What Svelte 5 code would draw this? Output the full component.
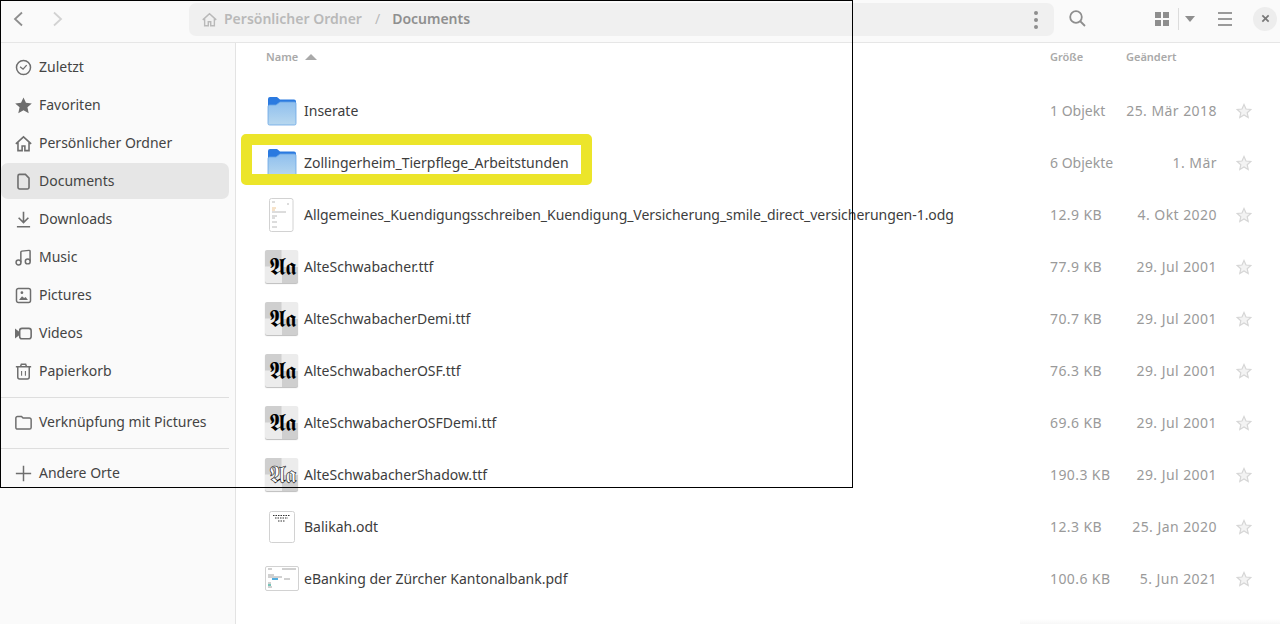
<script>
	const places = [
		{ label: 'Zuletzt', icon: 'recent' },
		{ label: 'Favoriten', icon: 'star' },
		{ label: 'Persönlicher Ordner', icon: 'home' },
		{ label: 'Documents', icon: 'doc', active: true },
		{ label: 'Downloads', icon: 'download' },
		{ label: 'Music', icon: 'music' },
		{ label: 'Pictures', icon: 'picture' },
		{ label: 'Videos', icon: 'video' },
		{ label: 'Papierkorb', icon: 'trash' }
	];

	const files = [
		{ name: 'Inserate', size: '1 Objekt', date: '25. Mär 2018', kind: 'folder' },
		{ name: 'Zollingerheim_Tierpflege_Arbeitstunden', size: '6 Objekte', date: '1. Mär', kind: 'folder' },
		{ name: 'Allgemeines_Kuendigungsschreiben_Kuendigung_Versicherung_smile_direct_versicherungen-1.odg', size: '12.9 KB', date: '4. Okt 2020', kind: 'letter' },
		{ name: 'AlteSchwabacher.ttf', size: '77.9 KB', date: '29. Jul 2001', kind: 'font' },
		{ name: 'AlteSchwabacherDemi.ttf', size: '70.7 KB', date: '29. Jul 2001', kind: 'font' },
		{ name: 'AlteSchwabacherOSF.ttf', size: '76.3 KB', date: '29. Jul 2001', kind: 'font' },
		{ name: 'AlteSchwabacherOSFDemi.ttf', size: '69.6 KB', date: '29. Jul 2001', kind: 'font' },
		{ name: 'AlteSchwabacherShadow.ttf', size: '190.3 KB', date: '29. Jul 2001', kind: 'shadow' },
		{ name: 'Balikah.odt', size: '12.3 KB', date: '25. Jan 2020', kind: 'note' },
		{ name: 'eBanking der Zürcher Kantonalbank.pdf', size: '100.6 KB', date: '5. Jun 2021', kind: 'pdf' }
	];
</script>

{#snippet placeIcon(name)}
	<svg class="place-icon" viewBox="0 0 16 16" aria-hidden="true">
		{#if name === 'recent'}
			<circle cx="8" cy="8" r="6.6" fill="none" stroke="currentColor" stroke-width="1.4" />
			<path d="M4.8 7.2 7.600 9.600 11 5.800" fill="none" stroke="currentColor" stroke-width="1.2" />
		{:else if name === 'star'}
			<path d="M8 .4l2.300 5 5.500.6-4.100 3.700 1.200 5.500L8 12.400l-4.900 2.800 1.200-5.500L.2 6l5.500-.6z" fill="currentColor" />
		{:else if name === 'home'}
			<path d="M.8 8.400 8 1.800l7.200 6.600M2.800 7v7.700h3.900V10.400h2.600v4.300h3.900V7" fill="none" stroke="currentColor" stroke-width="1.500" />
		{:else if name === 'doc'}
			<path d="M2.800 2.800A1.500 1.500 0 0 1 4.300 1.300H9.800L13.200 4.800v8.700a1.500 1.500 0 0 1-1.500 1.500H4.300a1.500 1.500 0 0 1-1.500-1.500z" fill="none" stroke="currentColor" stroke-width="1.500" />
		{:else if name === 'download'}
			<path d="M8 .8v10M3.400 6.400 8 11l4.600-4.600M1.800 14.800h12.400" fill="none" stroke="currentColor" stroke-width="1.500" />
		{:else if name === 'music'}
			<path d="M5.500 12.500V3a1 1 0 0 1 .9-1l6.700-.7a1 1 0 0 1 1.100 1V11.500" fill="none" stroke="currentColor" stroke-width="1.400" />
			<circle cx="3.300" cy="12.700" r="2.300" fill="none" stroke="currentColor" stroke-width="1.400" />
			<circle cx="12" cy="11.700" r="2.300" fill="none" stroke="currentColor" stroke-width="1.400" />
		{:else if name === 'picture'}
			<rect x="1.400" y="1.400" width="13.200" height="13.200" rx="1.800" fill="none" stroke="currentColor" stroke-width="1.400" />
			<path d="M3.800 12.200l2.800-3.600 2 1.800 1.400-1 2.200 2.800z" fill="currentColor" />
			<circle cx="6.500" cy="5.300" r="1.300" fill="currentColor" />
		{:else if name === 'video'}
			<rect x="4.400" y="3.200" width="10.800" height="9.800" rx="2.200" fill="none" stroke="currentColor" stroke-width="1.500" />
			<path d="M0 3.200 4 6.400v3.200L0 12.800z" fill="currentColor" />
		{:else if name === 'trash'}
			<path d="M.8 3.600h14.400M5.200 3.400 6 1.200h4l.8 2.200M2.600 3.800v9.400c0 1 .7 1.800 1.800 1.800h7.200c1.100 0 1.800-.8 1.800-1.800V3.800" fill="none" stroke="currentColor" stroke-width="1.400" />
			<path d="M6.200 7.500v4.500M9.800 7.500v4.500" stroke="currentColor" stroke-width="1" />
		{:else if name === 'folder'}
			<path d="M.8 3.800a1.500 1.500 0 0 1 1.500-1.500h3.800L7.600 3.800h6.100a1.500 1.500 0 0 1 1.500 1.500v7.400a1.500 1.500 0 0 1-1.500 1.500H2.300a1.500 1.500 0 0 1-1.500-1.500z" fill="none" stroke="currentColor" stroke-width="1.400" />
		{:else if name === 'plus'}
			<path d="M8 .8v14.400M.8 8h14.400" fill="none" stroke="currentColor" stroke-width="1.400" />
		{/if}
	</svg>
{/snippet}

{#snippet fileIcon(kind)}
	{#if kind === 'folder'}
		<svg class="file-icon" viewBox="0 0 32 32" aria-hidden="true">
			<defs>
				<linearGradient id="folder-front" x1="0" y1="0" x2="0" y2="1">
					<stop offset="0" stop-color="#8fbfee" />
					<stop offset="1" stop-color="#b8d8ef" />
				</linearGradient>
			</defs>
			<path d="M2 4A2 2 0 0 1 4 2h7l3 2.500h14A2 2 0 0 1 30 6.500v21H2z" fill="#2b7ae0" />
			<path d="M2 11.500A1.500 1.500 0 0 1 3.500 10h6.500l4-3h14.500A1.500 1.500 0 0 1 30 8.500v20a1.500 1.500 0 0 1-1.500 1.500h-25A1.500 1.500 0 0 1 2 28.500z" fill="url(#folder-front)" stroke="#6aa6e4" stroke-width=".8" />
		</svg>
	{:else if kind === 'font' || kind === 'shadow'}
		<span class="font-thumb" class:shadowed={kind === 'shadow'}><span class="font-thumb-text">𝕬𝖆</span></span>
	{:else if kind === 'letter'}
		<svg class="file-icon" viewBox="0 0 32 32" aria-hidden="true">
			<rect x="3.500" y="-.5" width="23.500" height="33" rx="2" fill="#fff" stroke="#d2d2d2" />
			<path d="M6 3h3M21 5h2M6 13h14M6 17h5M6 19h3M6 23h5M6 28h5" stroke="#a8a8a8" stroke-width=".8" />
			<path d="M6 9h4M6 11h3" stroke="#e8b878" stroke-width=".8" />
		</svg>
	{:else if kind === 'note'}
		<svg class="file-icon" viewBox="0 0 32 32" aria-hidden="true">
			<rect x="3.500" y=".5" width="25" height="31" rx="2" fill="#fff" stroke="#d2d2d2" />
			<path d="M7 4.500h17M9 7h13M12 10h7" stroke="#333" stroke-width="1.200" stroke-dasharray="1.500 1" />
		</svg>
	{:else}
		<svg class="file-icon" viewBox="0 0 32 32" aria-hidden="true">
			<rect x="-.5" y="3.500" width="33" height="24" rx="1.500" fill="#fff" stroke="#d2d2d2" />
			<path d="M2 6h4M16 6h14M2 12h6M2 14h14M18 16h6M2 20h3M2 24h4" stroke="#8a8a8a" stroke-width=".8" />
			<path d="M6 16h6" stroke="#2a9ad6" stroke-width="1.600" />
			<path d="M2 22h3" stroke="#1d9a8a" stroke-width="1.200" />
		</svg>
	{/if}
{/snippet}

<div class="window">
	<header class="toolbar">
		<div class="nav-buttons">
			<svg class="chevron back" viewBox="0 0 16 16" aria-hidden="true"><path d="M12 1.500 5 8l7 6.500" /></svg>
			<svg class="chevron" viewBox="0 0 16 16" aria-hidden="true"><path d="M5 1.500 12 8l-7 6.500" /></svg>
		</div>
		<div class="pathbar">
			<span class="crumb-home">{@render placeIcon('home')}</span>
			<span class="crumb">Persönlicher Ordner</span>
			<span class="crumb-sep">/</span>
			<span class="crumb current">Documents</span>
			<span class="path-dots"><i></i><i></i><i></i></span>
		</div>
		<svg class="tool-search" viewBox="0 0 17 17" aria-hidden="true">
			<circle cx="7" cy="7" r="5.800" />
			<path d="M11 11 16 16" />
		</svg>
		<span class="tool-grid"><i></i><i></i><i></i><i></i></span>
		<span class="tool-divider"></span>
		<span class="tool-caret"></span>
		<span class="tool-menu"><i></i><i></i><i></i></span>
		<span class="tool-close">
			<svg viewBox="0 0 10 10" aria-hidden="true"><path d="M1.500 1.500l7 7M8.500 1.500l-7 7" /></svg>
		</span>
	</header>

	<div class="content">
		<nav class="sidebar">
			{#each places as place}
				<div class="place" class:active={place.active}>
					{@render placeIcon(place.icon)}
					<span>{place.label}</span>
				</div>
			{/each}
			<hr />
			<div class="place">
				{@render placeIcon('folder')}
				<span>Verknüpfung mit Pictures</span>
			</div>
			<hr />
			<div class="place">
				{@render placeIcon('plus')}
				<span>Andere Orte</span>
			</div>
		</nav>

		<main class="listing">
			<div class="list-head">
				<span class="head-name">Name <span class="sort-arrow"></span></span>
				<span class="head-size">Größe</span>
				<span class="head-date">Geändert</span>
			</div>
			{#each files as file}
				<div class="row">
					<span class="thumb">{@render fileIcon(file.kind)}</span>
					<span class="name" class:long={file.name.length > 60}>{file.name}</span>
					<span class="size" class:bytes={file.size.endsWith('KB')}>{file.size}</span>
					<span class="date">{file.date}</span>
					<svg class="fav" viewBox="0 0 16 16" aria-hidden="true">
						<path d="M8 1.500l2 4.500 4.800.5-3.600 3.200 1 4.800L8 12l-4.200 2.500 1-4.800L1.200 6.500 6 6z" />
					</svg>
				</div>
			{/each}
		</main>
	</div>

	<div class="highlight"></div>
	<div class="capture-frame"></div>
	<div class="corner-shade"></div>
</div>

<style>
	:global(body) {
		margin: 0;
		background: #fff;
	}

	.window {
		position: relative;
		width: 1280px;
		height: 624px;
		overflow: hidden;
		background: #fff;
		color: #3d3d3d;
		font-family: 'Noto Sans', 'Open Sans', sans-serif;
		font-size: 14px;
	}

	.toolbar {
		display: flex;
		align-items: center;
		height: 43px;
		box-sizing: border-box;
		padding-bottom: 5px;
		background: #fafafa;
		border-bottom: 1px solid #e6e6e6;
	}

	.nav-buttons {
		display: flex;
		gap: 23px;
		width: 189px;
		padding-left: 10px;
		box-sizing: border-box;
	}

	.chevron {
		width: 16px;
		height: 16px;
		fill: none;
		stroke: #d2d2d2;
		stroke-width: 1.800;
	}

	.chevron.back {
		stroke: #8e8e8e;
	}

	.pathbar {
		display: flex;
		align-items: center;
		width: 865px;
		height: 33px;
		margin-top: 2px;
		padding: 0 12px 0 13px;
		box-sizing: border-box;
		border-radius: 7px;
		background: #f0f0f0;
		font-weight: 600;
		color: #b9b9b9;
	}

	.crumb-home {
		display: flex;
		color: #b9b9b9;
		margin-right: 7px;
	}

	.crumb,
	.crumb-sep {
		margin-top: -3px;
	}

	.crumb-sep {
		margin-left: 13px;
		margin-right: 12px;
		font-weight: 400;
	}

	.crumb.current {
		color: #8f8f8f;
	}

	.path-dots {
		display: flex;
		flex-direction: column;
		gap: 3px;
		margin-left: auto;
		margin-right: 4px;
	}

	.path-dots i {
		width: 4px;
		height: 4px;
		border-radius: 50%;
		background: #8e8e8e;
	}

	.tool-search {
		flex: none;
		width: 17px;
		height: 17px;
		margin-left: 15px;
		fill: none;
		stroke: #8e8e8e;
		stroke-width: 1.800;
	}

	.tool-grid {
		display: grid;
		grid-template-columns: 6px 6px;
		gap: 2px;
		margin-left: 69px;
	}

	.tool-grid i {
		width: 6px;
		height: 6px;
		background: #8e8e8e;
	}

	.tool-divider {
		width: 1px;
		height: 22px;
		margin-left: 9px;
		background: #dcdcdc;
	}

	.tool-caret {
		width: 0;
		height: 0;
		margin-left: 6px;
		border: 5px solid transparent;
		border-top: 6px solid #8e8e8e;
		border-bottom: 0;
	}

	.tool-menu {
		display: flex;
		flex-direction: column;
		gap: 4px;
		margin-left: 23px;
	}

	.tool-menu i {
		width: 14px;
		height: 2px;
		background: #9a9a9a;
	}

	.tool-close {
		display: flex;
		align-items: center;
		justify-content: center;
		width: 24px;
		height: 24px;
		margin-left: 21px;
		border-radius: 50%;
		background: #ededed;
	}

	.tool-close svg {
		width: 9px;
		height: 9px;
		fill: none;
		stroke: #777;
		stroke-width: 1.900;
	}

	.content {
		display: flex;
		height: 581px;
	}

	.sidebar {
		display: flex;
		flex-direction: column;
		flex: none;
		width: 236px;
		box-sizing: border-box;
		padding: 6px 6px 0 1px;
		background: #fafafa;
		border-right: 1px solid #e3e3e3;
	}

	.place {
		display: flex;
		align-items: center;
		flex: none;
		gap: 7px;
		height: 36px;
		margin-bottom: 2px;
		padding-left: 14px;
		border-radius: 7px;
		color: #444;
	}

	.place span {
		margin-top: -2px;
	}

	.place.active {
		background: #e6e6e6;
	}

	.place-icon {
		flex: none;
		width: 17px;
		height: 17px;
		color: #6e6e6e;
	}

	.crumb-home .place-icon {
		width: 15px;
		height: 15px;
		color: #b9b9b9;
	}

	.sidebar hr {
		flex: none;
		width: 100%;
		height: 1px;
		margin: 6px 0;
		border: 0;
		background: #dedede;
	}

	.listing {
		flex: 1;
		min-width: 0;
	}

	.list-head {
		display: flex;
		align-items: center;
		height: 27px;
		padding-bottom: 15px;
		padding-left: 30px;
		font-size: 11px;
		font-weight: 600;
		color: #a9a9a9;
	}

	.head-name {
		flex: 1;
	}

	.sort-arrow {
		display: inline-block;
		width: 0;
		height: 0;
		margin-left: 4px;
		vertical-align: 1px;
		border: 6px solid transparent;
		border-bottom: 6px solid #a9a9a9;
		border-top: 0;
	}

	.head-size {
		width: 76px;
	}

	.head-date {
		width: 154px;
	}

	.row {
		display: flex;
		align-items: center;
		height: 52px;
		padding-left: 30px;
		padding-right: 9px;
	}

	.thumb {
		flex: none;
		display: flex;
		width: 32px;
		height: 32px;
		margin-right: 6px;
	}

	.file-icon {
		width: 32px;
		height: 32px;
		overflow: visible;
	}

	.font-thumb {
		display: flex;
		align-items: center;
		justify-content: center;
		width: 33px;
		height: 33px;
		margin: -1px 0 0 -1px;
		flex: none;
		border-radius: 2px;
		overflow: hidden;
		box-shadow: 0 1px 1px #bdbdbd;
		background:
			linear-gradient(#cfcfcf, #cfcfcf) right bottom / 50% 50% no-repeat,
			linear-gradient(#cfcfcf, #cfcfcf) left top / 50% 50% no-repeat,
			#ececec;
	}

	.font-thumb-text {
		font-family: 'DejaVu Serif', 'DejaVu Sans', 'Liberation Serif', serif;
		font-size: 24px;
		font-weight: 400;
		letter-spacing: -1px;
		color: #000;
	}

	.font-thumb.shadowed .font-thumb-text {
		color: #fff;
		-webkit-text-stroke: .6px #111;
	}

	.name,
	.size,
	.date {
		margin-top: -2px;
	}

	.name {
		flex: 1;
		min-width: 0;
		white-space: nowrap;
		color: #3d3d3d;
	}

	.name.long {
		letter-spacing: -0.045px;
	}

	.size {
		flex: none;
		width: 76px;
		color: #9a9a9a;
	}

	.size.bytes {
		letter-spacing: 0.4px;
	}

	.date {
		flex: none;
		width: 91px;
		text-align: right;
		color: #9a9a9a;
		white-space: nowrap;
		letter-spacing: 0.45px;
	}

	.fav {
		flex: none;
		width: 16px;
		height: 16px;
		margin: 0 19px;
		fill: #f3f3f3;
		stroke: #d6d6d6;
		stroke-width: 1.200;
	}

	.highlight {
		position: absolute;
		left: 241px;
		top: 134px;
		width: 351px;
		height: 51px;
		box-sizing: border-box;
		border: 11px solid #ece52a;
		border-radius: 5px;
		pointer-events: none;
	}

	.capture-frame {
		position: absolute;
		left: 0;
		top: 0;
		width: 853px;
		height: 488px;
		box-sizing: border-box;
		border: 1px solid #000;
		pointer-events: none;
	}

	.corner-shade {
		position: absolute;
		right: 0;
		bottom: 0;
		width: 260px;
		height: 5px;
		background: linear-gradient(transparent, #f7f7f7);
		pointer-events: none;
	}
</style>
